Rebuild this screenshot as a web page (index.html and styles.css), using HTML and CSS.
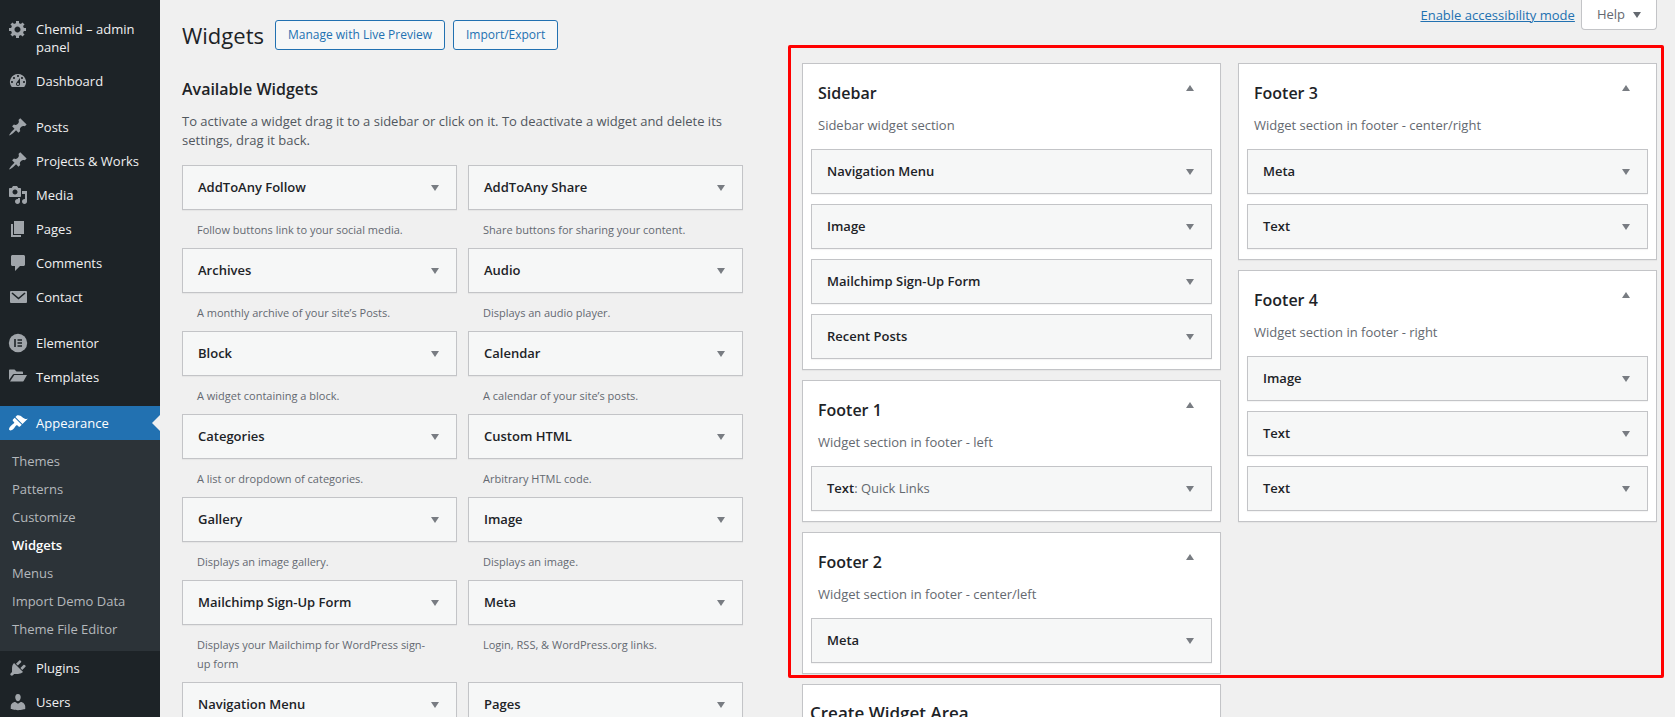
FILE: index.html
```html
<!DOCTYPE html>
<html lang="en">
<head>
<meta charset="utf-8">
<title>Widgets</title>
<link rel="stylesheet" href="styles.css">
</head>
<body>
<div class="shell">
  <nav class="menu" aria-label="Main menu">
    <ul class="menu-list">
      <li><a class="menu-link" href="#"><svg class="icon" viewBox="0 0 20 20"><path d="M18 12h-2.18c-.17.7-.44 1.35-.81 1.93l1.54 1.54-2.1 2.1-1.54-1.54c-.58.36-1.23.63-1.91.79V19H8v-2.18c-.68-.16-1.33-.43-1.91-.79l-1.54 1.54-2.12-2.12 1.54-1.54c-.36-.58-.63-1.23-.79-1.91H1V9.03h2.17c.16-.7.44-1.35.8-1.94L2.43 5.55l2.1-2.1 1.54 1.54c.58-.37 1.24-.64 1.93-.81V2h3v2.18c.68.16 1.33.43 1.91.79l1.54-1.54 2.12 2.12-1.54 1.54c.36.59.64 1.24.8 1.94H18V12zm-8.5 1.5c1.66 0 3-1.34 3-3s-1.34-3-3-3-3 1.34-3 3 1.34 3 3 3z"/></svg><span>Chemid – admin panel</span></a></li>
      <li><a class="menu-link" href="#"><svg class="icon" viewBox="0 0 20 20"><path fill-rule="evenodd" d="M3.76 16h12.48A7.998 7.998 0 0 0 10 3a7.998 7.998 0 0 0-6.24 13zM10 4c.55 0 1 .45 1 1s-.45 1-1 1-1-.45-1-1 .45-1 1-1zM6 6c.55 0 1 .45 1 1s-.45 1-1 1-1-.45-1-1 .45-1 1-1zm8 0c.55 0 1 .45 1 1s-.45 1-1 1-1-.45-1-1 .45-1 1-1zm-5.37 5.55L12 7v6c0 1.1-.9 2-2 2s-2-.9-2-2c0-.57.24-1.08.63-1.45zM4 10c.55 0 1 .45 1 1s-.45 1-1 1-1-.45-1-1 .45-1 1-1zm12 0c.55 0 1 .45 1 1s-.45 1-1 1-1-.45-1-1 .45-1 1-1zm-5 3c0-.55-.45-1-1-1s-1 .45-1 1 .45 1 1 1 1-.45 1-1z"/></svg><span>Dashboard</span></a></li>
      <li class="group-start"><a class="menu-link" href="#"><svg class="icon" viewBox="0 0 20 20"><path d="M10.44 3.02l1.82-1.82 6.36 6.35-1.83 1.82c-1.05-.68-2.48-.57-3.41.36l-.75.75c-.92.93-1.04 2.35-.35 3.41l-1.83 1.82-2.41-2.41-2.8 2.79c-.42.42-3.38 2.71-3.8 2.29s1.86-3.39 2.28-3.81l2.79-2.79L4.1 9.36l1.83-1.82c1.05.69 2.48.57 3.4-.36l.75-.75c.93-.92 1.05-2.35.36-3.41z"/></svg><span>Posts</span></a></li>
      <li><a class="menu-link" href="#"><svg class="icon" viewBox="0 0 20 20"><path d="M10.44 3.02l1.82-1.82 6.36 6.35-1.83 1.82c-1.05-.68-2.48-.57-3.41.36l-.75.75c-.92.93-1.04 2.35-.35 3.41l-1.83 1.82-2.41-2.41-2.8 2.79c-.42.42-3.38 2.71-3.8 2.29s1.86-3.39 2.28-3.81l2.79-2.79L4.1 9.36l1.83-1.82c1.05.69 2.48.57 3.4-.36l.75-.75c.93-.92 1.05-2.35.36-3.41z"/></svg><span>Projects &amp; Works</span></a></li>
      <li><a class="menu-link" href="#"><svg class="icon" viewBox="0 0 20 20"><path d="M13 11V4c0-.55-.45-1-1-1h-1.67L9 1H5L3.67 3H2c-.55 0-1 .45-1 1v7c0 .55.45 1 1 1h10c.55 0 1-.45 1-1zM7 4.5c1.38 0 2.5 1.12 2.5 2.5S8.38 9.5 7 9.5 4.5 8.38 4.5 7 5.62 4.5 7 4.5zM14 6h5v10.5c0 1.38-1.12 2.5-2.5 2.5S14 17.88 14 16.5s1.12-2.5 2.5-2.5c.17 0 .34.02.5.05V9h-3V6zm-4 8.05V13h2v3.5c0 1.38-1.12 2.5-2.5 2.5S7 17.88 7 16.5 8.12 14 9.5 14c.17 0 .34.02.5.05z"/></svg><span>Media</span></a></li>
      <li><a class="menu-link" href="#"><svg class="icon" viewBox="0 0 20 20"><path d="M6 15V2h10v13H6zm-1 1h8v2H3V5h2v11z"/></svg><span>Pages</span></a></li>
      <li><a class="menu-link" href="#"><svg class="icon" viewBox="0 0 20 20"><path d="M4.500 2h11c.8 0 1.500.7 1.500 1.500v8c0 .8-.7 1.500-1.500 1.500H12l-5 5v-5H4.500c-.8 0-1.500-.7-1.500-1.500v-8C3 2.700 3.700 2 4.500 2z"/></svg><span>Comments</span></a></li>
      <li><a class="menu-link" href="#"><svg class="icon" viewBox="0 0 20 20"><rect x="2" y="4" width="17" height="12" rx="1"/><path class="cut" d="M4 6l6.500 5.500L17 6"/></svg><span>Contact</span></a></li>
      <li class="group-start"><a class="menu-link" href="#"><svg class="icon" viewBox="0 0 20 20"><circle cx="10" cy="10" r="9.200"/><path class="cut" d="M7 6v8M9.500 7H14M9.500 10H14M9.500 13H14"/></svg><span>Elementor</span></a></li>
      <li><a class="menu-link" href="#"><svg class="icon" viewBox="0 0 20 20"><path d="M1 13V3.500c0-.6.400-1 1-1h4.500l2 2H14c.6 0 1 .4 1 1V7H6.200c-.8 0-1.300.3-1.700 1z"/><path d="M6.300 8H19L15.600 13.900c-.3.400-.7.600-1.200.6H2z"/></svg><span>Templates</span></a></li>
      <li class="group-start"><a class="menu-link menu-link-current" href="#"><svg class="icon" viewBox="0 0 20 20"><path d="M14.480 11.060L7.410 3.990l1.500-1.500c.5-.56 2.300-.47 3.510.32 1.210.8 1.430 1.280 2.910 2.100 1.180.64 2.450 1.260 4.450.85zm-.71.71L6.700 4.700 4.930 6.470c-.39.39-.39 1.020 0 1.410l1.060 1.060c.39.39.39 1.030 0 1.420-.6.6-1.430 1.110-2.210 1.690-.35.26-.7.53-1.010.84C1.430 14.230.4 16.080 1.400 17.070c.99 1 2.840-.03 4.180-1.360.31-.31.58-.66.85-1.020.57-.78 1.080-1.610 1.690-2.210.39-.39 1.020-.39 1.410 0l1.060 1.060c.39.39 1.020.39 1.410 0z"/></svg><span>Appearance</span></a>
        <ul class="submenu">
          <li><a class="submenu-link" href="#">Themes</a></li>
          <li><a class="submenu-link" href="#">Patterns</a></li>
          <li><a class="submenu-link" href="#">Customize</a></li>
          <li><a class="submenu-link submenu-link-current" href="#" aria-current="page">Widgets</a></li>
          <li><a class="submenu-link" href="#">Menus</a></li>
          <li><a class="submenu-link" href="#">Import Demo Data</a></li>
          <li><a class="submenu-link" href="#">Theme File Editor</a></li>
        </ul>
      </li>
      <li><a class="menu-link" href="#"><svg class="icon" viewBox="0 0 20 20"><path d="M13.110 4.360L9.870 7.600 8 5.730l3.240-3.240c.35-.34 1.050-.2 1.560.32.52.51.66 1.210.31 1.550zm-8 1.770l.91-1.120 9.010 9.010-1.190.84c-.71.71-2.630 1.160-3.820 1.160H6.140L4.900 17.260c-.59.59-1.540.59-2.120 0-.59-.58-.59-1.530 0-2.120l1.240-1.240v-3.880c0-1.130.4-3.190 1.090-3.890zm7.260 3.970l3.240-3.240c.34-.35 1.040-.21 1.550.31.52.51.66 1.210.31 1.550l-3.240 3.250z"/></svg><span>Plugins</span></a></li>
      <li><a class="menu-link" href="#"><svg class="icon" viewBox="0 0 20 20"><path d="M10 9.250c-2.270 0-2.730-3.440-2.730-3.440C7 4.020 7.820 2 9.970 2c2.160 0 2.980 2.020 2.710 3.810 0 0-.41 3.440-2.680 3.440zm0 2.570L12.720 10c2.390 0 4.520 2.330 4.520 4.530v2.490s-3.650 1.130-7.240 1.130c-3.650 0-7.240-1.130-7.240-1.130v-2.490c0-2.250 1.940-4.480 4.470-4.480z"/></svg><span>Users</span></a></li>
    </ul>
  </nav>

  <main class="main">
    <header class="header">
      <div class="heading">
        <h1 class="page-title">Widgets</h1>
        <a class="action" href="#">Manage with Live Preview</a>
        <a class="action" href="#">Import/Export</a>
      </div>
      <div class="screen-links">
        <a class="access-link" href="#">Enable accessibility mode</a>
        <button class="help" type="button">Help <span class="arrow arrow-dark"></span></button>
      </div>
    </header>

    <div class="columns">
      <section class="available">
        <h2 class="section-title">Available Widgets</h2>
        <p class="intro">To activate a widget drag it to a sidebar or click on it. To deactivate a widget and delete its settings, drag it back.</p>
        <div class="widget-grid">
          <div><button class="widget" type="button">AddToAny Follow<span class="arrow"></span></button><p class="note">Follow buttons link to your social media.</p></div>
          <div><button class="widget" type="button">AddToAny Share<span class="arrow"></span></button><p class="note">Share buttons for sharing your content.</p></div>
          <div><button class="widget" type="button">Archives<span class="arrow"></span></button><p class="note">A monthly archive of your site’s Posts.</p></div>
          <div><button class="widget" type="button">Audio<span class="arrow"></span></button><p class="note">Displays an audio player.</p></div>
          <div><button class="widget" type="button">Block<span class="arrow"></span></button><p class="note">A widget containing a block.</p></div>
          <div><button class="widget" type="button">Calendar<span class="arrow"></span></button><p class="note">A calendar of your site’s posts.</p></div>
          <div><button class="widget" type="button">Categories<span class="arrow"></span></button><p class="note">A list or dropdown of categories.</p></div>
          <div><button class="widget" type="button">Custom HTML<span class="arrow"></span></button><p class="note">Arbitrary HTML code.</p></div>
          <div><button class="widget" type="button">Gallery<span class="arrow"></span></button><p class="note">Displays an image gallery.</p></div>
          <div><button class="widget" type="button">Image<span class="arrow"></span></button><p class="note">Displays an image.</p></div>
          <div><button class="widget" type="button">Mailchimp Sign-Up Form<span class="arrow"></span></button><p class="note">Displays your Mailchimp for WordPress sign-up form</p></div>
          <div><button class="widget" type="button">Meta<span class="arrow"></span></button><p class="note">Login, RSS, &amp; WordPress.org links.</p></div>
          <div><button class="widget" type="button">Navigation Menu<span class="arrow"></span></button></div>
          <div><button class="widget" type="button">Pages<span class="arrow"></span></button></div>
        </div>
      </section>

      <div class="areas">
        <div class="area-grid">
          <div class="area-column">
            <section class="area">
              <div class="area-head"><h2 class="section-title">Sidebar</h2><button class="collapse" type="button" aria-label="Collapse Sidebar"><span class="arrow arrow-up"></span></button></div>
              <p class="area-note">Sidebar widget section</p>
              <div class="area-widgets">
                <button class="widget" type="button">Navigation Menu<span class="arrow"></span></button>
                <button class="widget" type="button">Image<span class="arrow"></span></button>
                <button class="widget" type="button">Mailchimp Sign-Up Form<span class="arrow"></span></button>
                <button class="widget" type="button">Recent Posts<span class="arrow"></span></button>
              </div>
            </section>
            <section class="area">
              <div class="area-head"><h2 class="section-title">Footer 1</h2><button class="collapse" type="button" aria-label="Collapse Footer 1"><span class="arrow arrow-up"></span></button></div>
              <p class="area-note">Widget section in footer - left</p>
              <div class="area-widgets">
                <button class="widget" type="button"><span>Text<span class="in-title">: Quick Links</span></span><span class="arrow"></span></button>
              </div>
            </section>
            <section class="area">
              <div class="area-head"><h2 class="section-title">Footer 2</h2><button class="collapse" type="button" aria-label="Collapse Footer 2"><span class="arrow arrow-up"></span></button></div>
              <p class="area-note">Widget section in footer - center/left</p>
              <div class="area-widgets">
                <button class="widget" type="button">Meta<span class="arrow"></span></button>
              </div>
            </section>
          </div>
          <div class="area-column">
            <section class="area">
              <div class="area-head"><h2 class="section-title">Footer 3</h2><button class="collapse" type="button" aria-label="Collapse Footer 3"><span class="arrow arrow-up"></span></button></div>
              <p class="area-note">Widget section in footer - center/right</p>
              <div class="area-widgets">
                <button class="widget" type="button">Meta<span class="arrow"></span></button>
                <button class="widget" type="button">Text<span class="arrow"></span></button>
              </div>
            </section>
            <section class="area">
              <div class="area-head"><h2 class="section-title">Footer 4</h2><button class="collapse" type="button" aria-label="Collapse Footer 4"><span class="arrow arrow-up"></span></button></div>
              <p class="area-note">Widget section in footer - right</p>
              <div class="area-widgets">
                <button class="widget" type="button">Image<span class="arrow"></span></button>
                <button class="widget" type="button">Text<span class="arrow"></span></button>
                <button class="widget" type="button">Text<span class="arrow"></span></button>
              </div>
            </section>
          </div>
          <div class="highlight"></div>
        </div>
        <div class="create-row">
          <section class="area create"><h2 class="section-title create-title">Create Widget Area</h2></section>
        </div>
      </div>
    </div>
  </main>
</div>
</body>
</html>
```
FILE: styles.css
```css
* { box-sizing: border-box; }

body {
  margin: 0;
  background: #f0f0f0;
  color: #3c434a;
  font: 13px/19px "Open Sans", "Noto Sans", sans-serif;
}

h1, h2, p, ul { margin: 0; padding: 0; }
ul { list-style: none; }
button { font: inherit; cursor: pointer; }

.shell {
  display: flex;
  height: 100vh;
  overflow: hidden;
}

/* Admin menu */
.menu {
  flex: none;
  width: 160px;
  background: #1d2327;
}
.menu-list { padding-top: 12px; }
.group-start { margin-top: 12px; }
.menu-link {
  display: flex;
  gap: 8px;
  padding: 8px;
  color: #f0f0f1;
  line-height: 18px;
  text-decoration: none;
}
.icon {
  flex: none;
  width: 20px;
  height: 20px;
  margin: -1px 0;
  fill: #a0a5aa;
}
.cut {
  fill: none;
  stroke: #1d2327;
  stroke-width: 1.6;
}
.menu-link-current {
  position: relative;
  background: #2271b1;
  color: #fff;
}
.menu-link-current .icon { fill: #fff; }
.menu-link-current::after {
  content: "";
  position: absolute;
  right: 0;
  top: 9px;
  border: 8px solid transparent;
  border-left: 0;
  border-right-color: #f0f0f0;
}
.submenu {
  padding: 7px 0 8px;
  background: #2c3338;
}
.submenu-link {
  display: block;
  padding: 5px 12px;
  color: #b4b8bc;
  line-height: 18px;
  text-decoration: none;
}
.submenu-link-current { color: #fff; font-weight: 600; }

/* Header */
.main {
  flex: 1;
  min-width: 0;
  padding: 0 18px 0 22px;
}
.header {
  display: flex;
  justify-content: space-between;
  align-items: flex-start;
  height: 63px;
}
.heading {
  display: flex;
  align-items: center;
  gap: 8px;
  padding-top: 20px;
}
.page-title {
  padding-right: 3px;
  color: #1d2327;
  font-size: 22px;
  font-weight: 400;
  line-height: 30px;
}
.action {
  padding: 5px 12px;
  border: 1px solid #2271b1;
  border-radius: 3px;
  background: #f6f7f7;
  color: #2271b1;
  font-size: 12px;
  line-height: 18px;
  text-decoration: none;
}
.screen-links { display: flex; gap: 6px; }
.access-link { padding-top: 6px; color: #2271b1; }
.help {
  display: flex;
  align-items: center;
  gap: 8px;
  height: 30px;
  padding: 0 15px;
  border: 1px solid #c3c4c7;
  border-top: 0;
  border-radius: 0 0 4px 4px;
  background: #fff;
  color: #646970;
}

/* Shared pieces */
.arrow {
  flex: none;
  border: 4px solid transparent;
  border-top: 6px solid #787c82;
  border-bottom: 0;
}
.arrow-up {
  border-top: 0;
  border-bottom: 6px solid #787c82;
}
.arrow-dark { border-top-color: #646970; }
.section-title {
  color: #1d2327;
  font-size: 16px;
  font-weight: 600;
  line-height: 24px;
}
.widget {
  display: flex;
  justify-content: space-between;
  align-items: center;
  width: 100%;
  height: 45px;
  padding: 0 17px 0 15px;
  border: 1px solid #c3c4c7;
  background: #f6f7f7;
  color: #1d2327;
  font-weight: 600;
  text-align: left;
  box-shadow: 0 1px 1px rgba(0, 0, 0, 0.04);
}
.in-title { color: #646970; font-weight: 400; }

/* Content columns */
.columns {
  display: grid;
  grid-template-columns: 561fr 855fr;
  gap: 59px;
}
.available { padding-top: 14px; }
.intro { padding: 11px 20px 15px 0; color: #50575e; }
.widget-grid {
  display: grid;
  grid-template-columns: 1fr 1fr;
  column-gap: 11px;
}
.note {
  padding: 10px 25px 9px 15px;
  color: #646970;
  font-size: 11px;
}

.area-grid {
  position: relative;
  display: grid;
  grid-template-columns: 1fr 1fr;
  align-items: start;
  gap: 17px;
}
.area-column { display: grid; gap: 10px; }
.area {
  padding: 0 8px 10px;
  border: 1px solid #c3c4c7;
  background: #fff;
  box-shadow: 0 1px 1px rgba(0, 0, 0, 0.04);
}
.area-head {
  display: flex;
  justify-content: space-between;
  align-items: flex-start;
  padding: 17px 7px 9px;
}
.collapse {
  display: flex;
  padding: 4px 11px;
  border: 0;
  background: none;
}
.area-note { padding: 2px 7px 14px; color: #646970; }
.area-widgets { display: grid; gap: 10px; }
.highlight {
  position: absolute;
  inset: -18px -7px -4px -14px;
  border: 3px solid #f00;
  border-radius: 2px;
  pointer-events: none;
}
.create-row {
  display: grid;
  grid-template-columns: 1fr 1fr;
  gap: 17px;
  padding-top: 10px;
}
.create { padding: 16px 7px; }
.create-title { font-size: 17px; }
```
